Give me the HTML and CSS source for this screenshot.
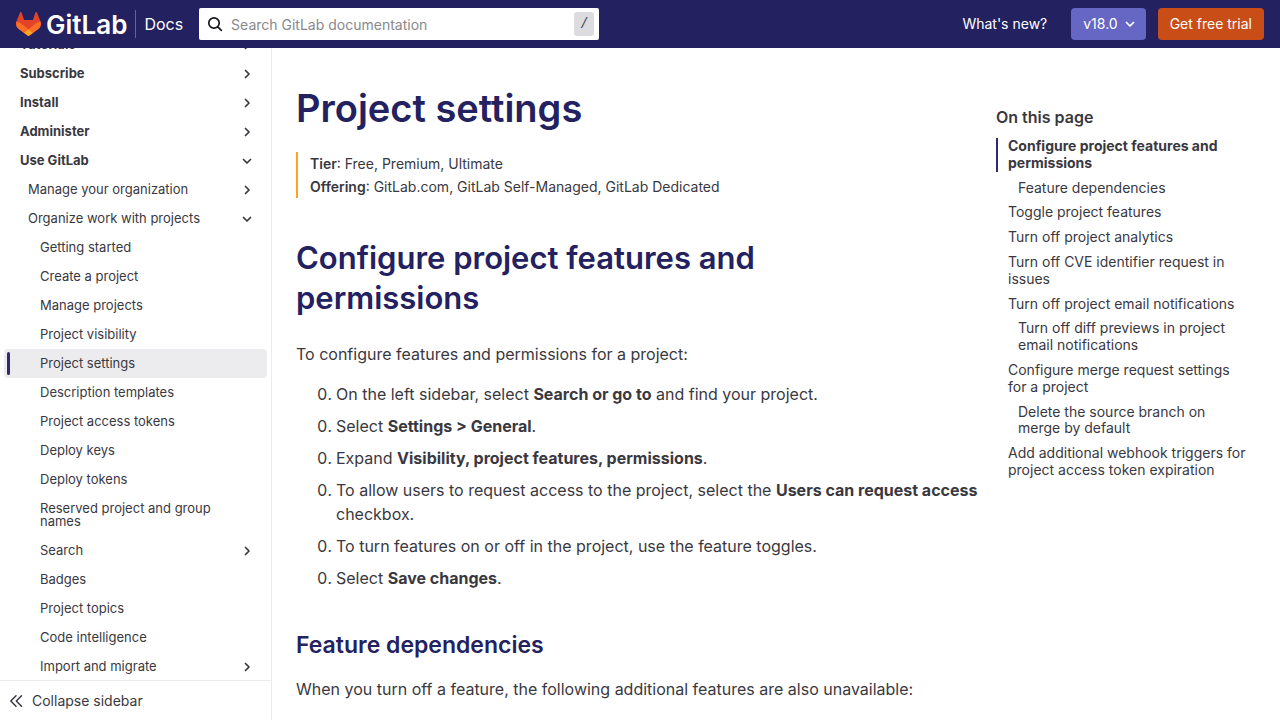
FILE: index.html
```html
<!DOCTYPE html>
<html lang="en">
<head>
<meta charset="utf-8">
<title>Project settings | GitLab Docs</title>
<link rel="stylesheet" href="styles.css">
</head>
<body>
<svg class="sprite" aria-hidden="true">
  <symbol id="right" viewBox="0 0 16 16"><path d="M6.5 4.5 10 8l-3.500 3.500" fill="none" stroke="currentColor" stroke-width="1.700" stroke-linecap="round" stroke-linejoin="round"/></symbol>
  <symbol id="down" viewBox="0 0 16 16"><path d="M4.500 6.500 8 10l3.500-3.500" fill="none" stroke="currentColor" stroke-width="1.700" stroke-linecap="round" stroke-linejoin="round"/></symbol>
</svg>
<header class="topbar">
  <a class="brand" href="#">
    <svg class="tanuki" viewBox="0 0 25 24" aria-hidden="true">
      <path fill="#e24329" d="M24.500 9.500 21 .6a.9.900 0 0 0-1.700.1l-2.400 7.200H8.100L5.700.7A.9.900 0 0 0 4 .6L.5 9.500a6.500 6.500 0 0 0 2.200 7.400l9.800 7.300 9.800-7.300a6.500 6.500 0 0 0 2.200-7.400z"/>
      <path fill="#fc6d26" d="M24.500 9.500a11.500 11.500 0 0 0-4.700 2.100l-7.300 5.600 4.700 3.600 5.100-3.900a6.500 6.500 0 0 0 2.200-7.400zM.5 9.500a11.500 11.500 0 0 1 4.700 2.100l7.300 5.600-4.700 3.600-5.100-3.900A6.500 6.500 0 0 1 .5 9.500z"/>
      <path fill="#fca326" d="m7.800 20.800 3.700 2.800a1.700 1.700 0 0 0 2 0l3.700-2.800-4.700-3.600z"/>
    </svg>
    <span class="wordmark">GitLab</span>
    <span class="docs">Docs</span>
  </a>
  <form class="search" role="search">
    <svg class="search-icon" viewBox="0 0 16 16" aria-hidden="true"><path d="M11.300 11.300 14.300 14.300M12.200 7A5.200 5.200 0 1 1 1.800 7a5.200 5.200 0 0 1 10.400 0z" fill="none" stroke="currentColor" stroke-width="1.700" stroke-linecap="round"/></svg>
    <input class="search-input" type="text" placeholder="Search GitLab documentation" aria-label="Search GitLab documentation">
    <kbd class="key">/</kbd>
  </form>
  <nav class="top-links" aria-label="Site">
    <a class="news" href="#">What's new?</a>
    <button class="btn version" type="button">v18.0<svg class="icon" aria-hidden="true"><use href="#down"/></svg></button>
    <a class="btn trial" href="#">Get free trial</a>
  </nav>
</header>
<div class="layout">
  <aside class="sidebar">
    <nav class="side-scroll" aria-label="Documentation">
      <ul class="side-list">
        <li><a class="item top" href="#">Tutorials<svg class="icon" aria-hidden="true"><use href="#right"/></svg></a></li>
        <li><a class="item top" href="#">Subscribe<svg class="icon" aria-hidden="true"><use href="#right"/></svg></a></li>
        <li><a class="item top" href="#">Install<svg class="icon" aria-hidden="true"><use href="#right"/></svg></a></li>
        <li><a class="item top" href="#">Administer<svg class="icon" aria-hidden="true"><use href="#right"/></svg></a></li>
        <li><a class="item top" href="#">Use GitLab<svg class="icon" aria-hidden="true"><use href="#down"/></svg></a></li>
        <li><a class="item second" href="#">Manage your organization<svg class="icon" aria-hidden="true"><use href="#right"/></svg></a></li>
        <li><a class="item second" href="#">Organize work with projects<svg class="icon" aria-hidden="true"><use href="#down"/></svg></a></li>
        <li><a class="item third" href="#">Getting started</a></li>
        <li><a class="item third" href="#">Create a project</a></li>
        <li><a class="item third" href="#">Manage projects</a></li>
        <li><a class="item third" href="#">Project visibility</a></li>
        <li><a class="item third current" href="#" aria-current="page">Project settings</a></li>
        <li><a class="item third" href="#">Description templates</a></li>
        <li><a class="item third" href="#">Project access tokens</a></li>
        <li><a class="item third" href="#">Deploy keys</a></li>
        <li><a class="item third" href="#">Deploy tokens</a></li>
        <li><a class="item third" href="#">Reserved project and group names</a></li>
        <li><a class="item third" href="#">Search<svg class="icon" aria-hidden="true"><use href="#right"/></svg></a></li>
        <li><a class="item third" href="#">Badges</a></li>
        <li><a class="item third" href="#">Project topics</a></li>
        <li><a class="item third" href="#">Code intelligence</a></li>
        <li><a class="item third" href="#">Import and migrate<svg class="icon" aria-hidden="true"><use href="#right"/></svg></a></li>
      </ul>
    </nav>
    <button class="collapse" type="button">
      <svg class="icon" viewBox="0 0 16 16" aria-hidden="true"><path d="M8 2.800 2.800 8 8 13.200M13.500 2.800 8.300 8l5.200 5.200" fill="none" stroke="currentColor" stroke-width="1.500" stroke-linecap="round" stroke-linejoin="round"/></svg>
      Collapse sidebar
    </button>
  </aside>
  <main class="content">
    <h1>Project settings</h1>
    <div class="details">
      <p><strong>Tier</strong>: Free, Premium, Ultimate</p>
      <p><strong>Offering</strong>: GitLab.com, GitLab Self-Managed, GitLab Dedicated</p>
    </div>
    <h2 id="configure">Configure project features and permissions</h2>
    <p class="text">To configure features and permissions for a project:</p>
    <ol class="steps">
      <li value="0">On the left sidebar, select <strong>Search or go to</strong> and find your project.</li>
      <li value="0">Select <strong>Settings &gt; General</strong>.</li>
      <li value="0">Expand <strong>Visibility, project features, permissions</strong>.</li>
      <li value="0">To allow users to request access to the project, select the <strong>Users can request access</strong> checkbox.</li>
      <li value="0">To turn features on or off in the project, use the feature toggles.</li>
      <li value="0">Select <strong>Save changes</strong>.</li>
    </ol>
    <h3 id="dependencies">Feature dependencies</h3>
    <p class="text">When you turn off a feature, the following additional features are also unavailable:</p>
  </main>
  <nav class="toc" aria-labelledby="toc-title">
    <h2 class="toc-title" id="toc-title">On this page</h2>
    <ul class="toc-list">
      <li><a class="toc-link active" href="#configure">Configure project features and permissions</a></li>
      <li><a class="toc-link nested" href="#dependencies">Feature dependencies</a></li>
      <li><a class="toc-link" href="#">Toggle project features</a></li>
      <li><a class="toc-link" href="#">Turn off project analytics</a></li>
      <li><a class="toc-link" href="#">Turn off CVE identifier request in issues</a></li>
      <li><a class="toc-link" href="#">Turn off project email notifications</a></li>
      <li><a class="toc-link nested" href="#">Turn off diff previews in project email notifications</a></li>
      <li><a class="toc-link" href="#">Configure merge request settings for a project</a></li>
      <li><a class="toc-link nested" href="#">Delete the source branch on merge by default</a></li>
      <li><a class="toc-link" href="#">Add additional webhook triggers for project access token expiration</a></li>
    </ul>
  </nav>
</div>
</body>
</html>
```
FILE: styles.css
```css
* { box-sizing: border-box; }

body {
  margin: 0;
  background: #fff;
  color: #3a383f;
  font: 16px/24px Inter, sans-serif;
}

a { color: inherit; text-decoration: none; }
ul, ol, p, h1, h2, h3 { margin: 0; padding: 0; }
ul { list-style: none; }
button { border: 0; cursor: pointer; }
.sprite { display: none; }
.icon { flex: none; width: 16px; height: 16px; }

/* Top bar */
.topbar {
  position: sticky;
  top: 0;
  z-index: 2;
  display: flex;
  align-items: center;
  height: 48px;
  padding: 0 16px;
  background: #232160;
  color: #fff;
}
.brand { display: flex; align-items: center; }
.tanuki { width: 25px; height: 24px; }
.wordmark {
  margin-left: 5px;
  padding-top: 2px;
  font-size: 26px;
  font-weight: 600;
  line-height: 26px;
}
.docs {
  margin-left: 8px;
  padding-left: 8px;
  border-left: 1px solid #65648f;
  line-height: 28px;
}
.search {
  display: flex;
  align-items: center;
  width: 400px;
  height: 32px;
  margin-left: 16px;
  padding: 0 5px 0 8px;
  border-radius: 2px;
  background: #fff;
  color: #18171d;
}
.search-icon { flex: none; width: 16px; height: 16px; }
.search-input {
  flex: 1;
  min-width: 0;
  height: 32px;
  padding: 0 8px;
  border: 0;
  outline: 0;
  background: transparent;
  font: 14px Inter, sans-serif;
}
.search-input::placeholder { color: #89888d; }
.key {
  width: 20px;
  height: 24px;
  border-radius: 3px;
  background: #dcdcde;
  color: #4c4b51;
  font: 14px/24px "Liberation Mono", monospace;
  text-align: center;
}
.top-links {
  display: flex;
  align-items: center;
  margin-left: auto;
  font-size: 14px;
}
.news { margin-right: 24px; }
.btn {
  display: flex;
  align-items: center;
  height: 32px;
  padding: 0 12px;
  border-radius: 4px;
  color: #fff;
  font: 14px/16px Inter, sans-serif;
}
.version { gap: 4px; margin-right: 12px; padding-right: 8px; background: #6666c4; }
.trial { background: #c94d17; }

/* Page columns */
.layout {
  display: grid;
  grid-template-columns: 272px minmax(0, 1fr) 284px;
}

/* Sidebar */
.sidebar {
  position: sticky;
  top: 48px;
  display: flex;
  flex-direction: column;
  height: calc(100vh - 48px);
  border-right: 1px solid #ececef;
}
.side-scroll { flex: 1; min-height: 0; overflow: hidden; }
.side-list { margin-top: -18px; padding: 0 4px; }
.item {
  display: flex;
  align-items: center;
  justify-content: space-between;
  min-height: 29px;
  padding: 8px 12px 8px 16px;
  border-radius: 4px;
  font-size: 13px;
  line-height: 13px;
}
.item .icon { margin: -2px 0; }
.top { font-weight: 700; }
.second { padding-left: 24px; }
.third { padding-left: 36px; }
.current { position: relative; background: #ececef; }
.current::before {
  content: "";
  position: absolute;
  top: 3px;
  bottom: 3px;
  left: 3px;
  width: 3px;
  border-radius: 2px;
  background: #2f2a6b;
}
.collapse {
  display: flex;
  align-items: center;
  gap: 8px;
  height: 40px;
  padding: 0 8px;
  border-top: 1px solid #ececef;
  background: #fff;
  color: #3a383f;
  font: 14px/16px Inter, sans-serif;
}

/* Article */
.content { padding: 36px 16px 16px 24px; }
h1, h2, h3 { color: #232160; font-weight: 600; }
h1 { font-size: 38px; line-height: 48px; }
.details {
  margin-top: 20px;
  padding-left: 12px;
  border-left: 2px solid #fca326;
  font-size: 14px;
  line-height: 23px;
}
strong { font-weight: 600; }
h2 { margin-top: 40px; padding-right: 72px; font-size: 31px; line-height: 40px; }
.text { margin-top: 24px; }
.steps { margin-top: 16px; padding-left: 40px; }
.steps li + li { margin-top: 8px; }
.steps strong { font-weight: 700; }
h3 { margin-top: 40px; font-size: 23px; line-height: 30px; }
h3 + .text { margin-top: 17px; }

/* Table of contents */
.toc { padding: 57px 30px 16px 0; }
.toc-title {
  margin: 0;
  padding: 0;
  color: #3a383f;
  font-size: 16px;
  line-height: 24px;
}
.toc-list {
  display: grid;
  gap: 8px;
  margin-top: 9px;
  font-size: 14px;
  line-height: 1.2;
}
.toc-link {
  display: block;
  padding-left: 10px;
  border-left: 2px solid transparent;
}
.nested { padding-left: 20px; }
.active { border-left-color: #2f2a6b; font-weight: 700; }
```
